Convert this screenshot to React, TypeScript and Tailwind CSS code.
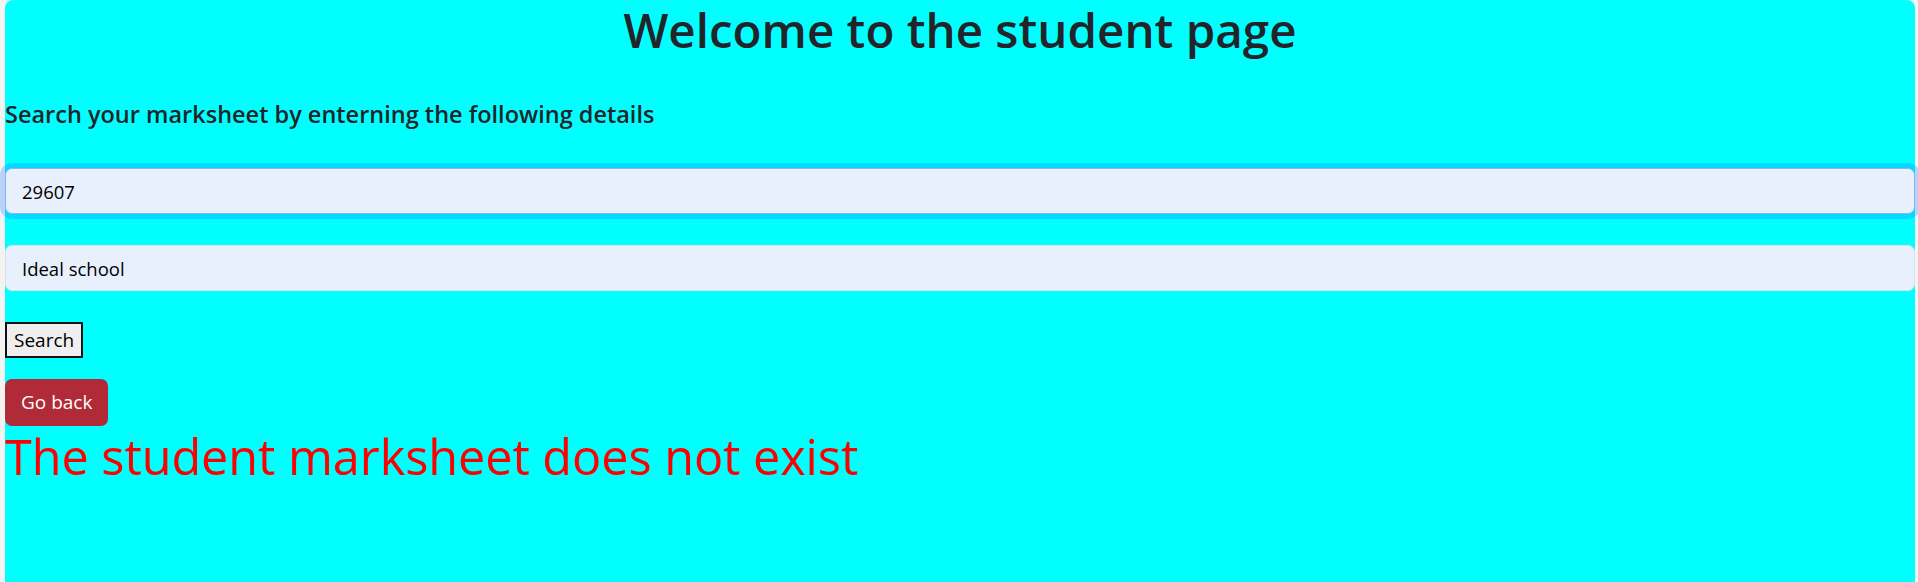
import React from "react";

function App() {
  return (
    <div className="min-h-screen bg-[#f3f3f3] pl-[5px] pr-[3px] font-['Open_Sans',sans-serif]">
      <div className="h-[582px] rounded-t-[8px] bg-[#00ffff]">
        <h1 className="text-center text-[47.5px] font-semibold leading-[60px] text-[#212529]">
          Welcome to the student page
        </h1>
        <h5 className="mt-[39px] text-[23.5px] font-semibold leading-[30px] text-[#212529]">
          Search your marksheet by enterning the following details
        </h5>
        <form className="mt-[39px] flex flex-col">
          <input
            defaultValue="29607"
            className="h-[46px] w-full rounded-[7px] border border-[#86b7fe] bg-[#e8f0fe] px-[16px] text-[18.5px] text-black shadow-[0_0_0_5px_rgba(13,110,253,0.25)] outline-none"
          />
          <input
            defaultValue="Ideal school"
            className="mt-[31px] h-[46px] w-full rounded-[7px] border border-[#dee2e6] bg-[#e8f0fe] px-[16px] text-[18.5px] text-black outline-none"
          />
          <div className="mt-[31px]">
            <button
              type="button"
              className="h-[36px] border-2 border-[#111] bg-[#efefef] px-[7px] text-[19px] text-black"
            >
              Search
            </button>
          </div>
          <div className="mt-[21px]">
            <button
              type="button"
              className="h-[47px] rounded-[7px] bg-[#b02a37] px-[16px] text-[19px] text-white"
            >
              Go back
            </button>
          </div>
        </form>
        <h1 className="mt-[2px] text-[48.5px] font-medium leading-[56px] text-[#ff0000]">
          The student marksheet does not exist
        </h1>
      </div>
    </div>
  );
}

export default App;
